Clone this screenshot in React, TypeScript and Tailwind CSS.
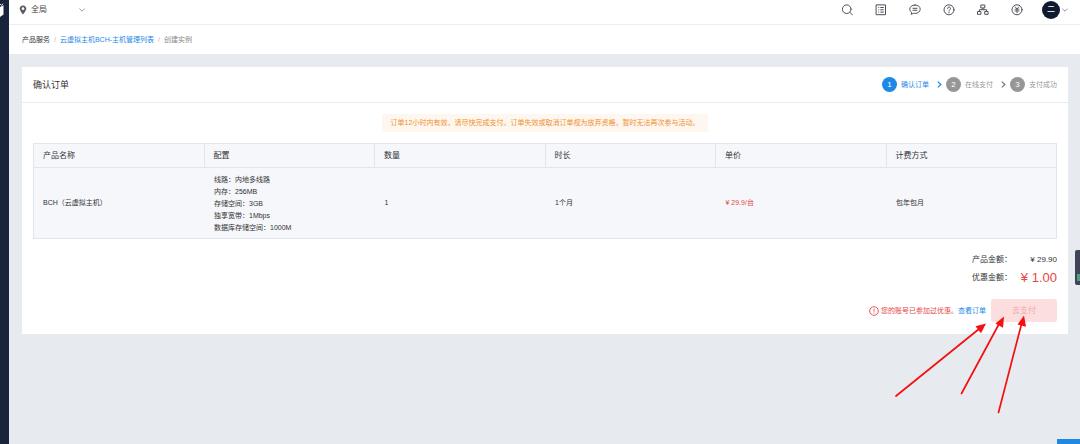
import type { ReactNode } from "react";
import clsx from "clsx";

const steps = ["确认订单", "在线支付", "支付成功"];

const columns = ["产品名称", "配置", "数量", "时长", "单价", "计费方式"];

const specs = [
  "线路：内地多线路",
  "内存：256MB",
  "存储空间：3GB",
  "独享宽带：1Mbps",
  "数据库存储空间：1000M",
];

function Icon({ children }: { children: ReactNode }) {
  return (
    <svg
      viewBox="0 0 12 12"
      className="block h-3 w-3"
      fill="none"
      stroke="currentColor"
      strokeWidth="1"
      strokeLinecap="round"
      strokeLinejoin="round"
    >
      {children}
    </svg>
  );
}

function ChevronDown() {
  return (
    <svg viewBox="0 0 6 4" className="block h-1 w-1.5" fill="none" stroke="#8a8f99" strokeWidth="0.9">
      <path d="M0.4 0.6 3 3.2 5.6 0.6" />
    </svg>
  );
}

const tools = [
  {
    label: "搜索",
    icon: (
      <>
        <circle cx="5.7" cy="5.2" r="4.3" />
        <path d="M8.8 8.3 11.5 11" />
      </>
    ),
  },
  {
    label: "备案",
    icon: (
      <>
        <rect x="1.5" y="0.9" width="9" height="9.8" />
        <path d="M3.3 3.5h0.9M5.3 3.5h3.5M3.3 5.8h0.9M5.3 5.8h3.5M3.3 8.1h0.9M5.3 8.1h3.5" strokeLinecap="butt" />
      </>
    ),
  },
  {
    label: "消息",
    icon: (
      <>
        <path d="M6 1c3 0 5.2 1.8 5.2 4.2S9 9.4 6 9.4c-.5 0-1 0-1.5-.2L2.3 10.4 2.5 8.3C1.4 7.5.8 6.4.8 5.2.8 2.8 3 1 6 1Z" />
        <path d="M4 4.300h4M4 6.300h4" />
      </>
    ),
  },
  {
    label: "帮助",
    icon: (
      <>
        <circle cx="6" cy="5.8" r="5" />
        <path d="M4.5 4.5c0-2 3-2 3 0 0 1.1-1.5 1.1-1.5 2.4M6 8.3v.4" />
      </>
    ),
  },
  {
    label: "组织",
    icon: (
      <>
        <rect x="4.2" y="1" width="3.6" height="3" />
        <rect x="0.9" y="7.5" width="3" height="2.800" />
        <rect x="8.1" y="7.5" width="3" height="2.800" />
        <path d="M6 4v1.700M2.400 7.500V5.700h7.200v1.800" />
      </>
    ),
  },
  {
    label: "费用",
    icon: (
      <>
        <circle cx="6" cy="5.8" r="5" />
        <path d="M4.300 3 6 5l1.700-2M6 5v3.800M4 5.200h4M4 7h4" strokeWidth="0.9" />
      </>
    ),
  },
];

function TopBar() {
  return (
    <header className="flex h-[25px] items-center justify-between border-b border-[#eceef1] bg-white pr-3 pb-1 pl-2.5">
      <button type="button" className="flex items-center text-[8px] leading-3 text-[#444]">
        <svg viewBox="0 0 8 10" className="mr-1 block h-2.5 w-2" fill="#555a63">
          <path
            fillRule="evenodd"
            d="M4 .4C2.100.4.700 1.800.700 3.600.700 5.800 4 9.600 4 9.600s3.300-3.800 3.300-6C7.300 1.800 5.900.4 4 .4Zm0 1.900a1.400 1.400 0 1 1 0 2.800 1.400 1.400 0 0 1 0-2.800Z"
          />
        </svg>
        <span className="mr-8">全局</span>
        <ChevronDown />
      </button>
      <div className="flex items-center">
        <nav className="flex gap-[22px] text-[#4c5058]">
          {tools.map((tool) => (
            <button key={tool.label} type="button" aria-label={tool.label}>
              <Icon>{tool.icon}</Icon>
            </button>
          ))}
        </nav>
        <button type="button" className="ml-[19px] flex items-center gap-0.5">
          <span className="flex h-[18px] w-[18px] items-center justify-center rounded-full bg-[#10192e] text-[8px] leading-3 text-white">
            二
          </span>
          <ChevronDown />
        </button>
      </div>
    </header>
  );
}

function Steps() {
  return (
    <ol className="flex items-center text-[7px] leading-3">
      {steps.map((step, i) => (
        <li key={step} className={clsx("flex items-center", i === 0 ? "text-[#1e88e5]" : "text-[#999]")}>
          <span
            className={clsx(
              "mr-1 flex h-[15px] w-[15px] items-center justify-center rounded-full text-[8px] text-white",
              i === 0 ? "bg-[#1e88e5]" : "bg-[#969696]"
            )}
          >
            {i + 1}
          </span>
          {step}
          {i < steps.length - 1 && (
            <svg
              viewBox="0 0 5 7"
              className="mr-1 ml-2 block h-[7px] w-[5px]"
              fill="none"
              stroke={i === 0 ? "#1e88e5" : "#777"}
              strokeWidth="1.200"
            >
              <path d="M0.800 0.600 3.900 3.500 0.800 6.400" />
            </svg>
          )}
        </li>
      ))}
    </ol>
  );
}

function OrderTable() {
  return (
    <table className="w-full table-fixed border-collapse border border-[#e2e5eb] bg-[#f5f7fb] text-left text-[7px] leading-3 text-[#333]">
      <thead>
        <tr className="h-6 border-b border-[#e2e5eb] text-[8px]">
          {columns.map((column) => (
            <th key={column} className="border-r border-[#e2e5eb] px-[9px] font-normal">
              {column}
            </th>
          ))}
        </tr>
      </thead>
      <tbody>
        <tr>
          <td className="px-[9px]">BCH（云虚拟主机）</td>
          <td className="px-2.5 pt-1.5 pb-1">
            {specs.map((spec) => (
              <div key={spec}>{spec}</div>
            ))}
          </td>
          <td className="px-2.5">1</td>
          <td className="px-2.5">1个月</td>
          <td className="px-2.5 text-[#e64545]">¥ 29.9/台</td>
          <td className="px-2.5">包年包月</td>
        </tr>
      </tbody>
    </table>
  );
}

// hand-drawn pointers over the pay button
function Arrows() {
  return (
    <svg viewBox="0 0 170 120" className="pointer-events-none absolute top-0 right-0 h-[120px] w-[170px]">
      <g stroke="#f50f0f" strokeWidth="1.7" strokeLinecap="round">
        <path d="M9 97 92 30" />
        <path d="M74.5 94.500 112 25" />
        <path d="M111.500 113.500 134.500 25" />
      </g>
      <g fill="#f50f0f">
        <path d="M99 24.500 88.500 27.300 94 34.200Z" />
        <path d="M117 17.500 108.500 24.500 116 28.800Z" />
        <path d="M137 16.500 130.500 25.500 139 27.700Z" />
      </g>
    </svg>
  );
}

function Checkout() {
  return (
    <>
      <dl className="mt-3 grid grid-cols-[40px_45px] justify-end text-[8px] leading-[18px] text-[#333]">
        <dt>产品金额：</dt>
        <dd className="text-right">¥ 29.90</dd>
        <dt>优惠金额：</dt>
        <dd className="text-right text-[13px] text-[#e64545]">¥ 1.00</dd>
      </dl>
      <div className="relative mt-3 flex items-center justify-end text-[7px] leading-3">
        <svg viewBox="0 0 10 10" className="mr-0.5 block h-2.5 w-2.5" fill="none" stroke="#e64545" strokeWidth="0.9">
          <circle cx="5" cy="5" r="4.300" />
          <path d="M5 2.500v3.200M5 6.600v.9" />
        </svg>
        <p className="text-[#e64545]">您的账号已参加过优惠。</p>
        <a href="#orders" className="mr-[5px] text-[#1e88e5]">
          查看订单
        </a>
        <button
          type="button"
          disabled
          className="h-[23px] w-[66px] rounded-[3px] bg-[#fcdede] text-[8px] text-[#f0a9a9]"
        >
          去支付
        </button>
        <Arrows />
      </div>
    </>
  );
}

export default function App() {
  return (
    <div className="flex min-h-screen bg-[#e7eaef] font-['Liberation_Sans','Noto_Sans_CJK_SC',sans-serif]">
      <aside className="w-[9px] shrink-0 overflow-hidden bg-[#1a233c]">
        <svg viewBox="0 0 9 20" className="block h-5 w-[9px]">
          <path d="M0 7 3.500 5.200v9.300L0 17Z" fill="#fff" />
          <path d="M0 4.200 1.500 5.200 3.200 3.800" fill="none" stroke="#fff" strokeWidth="0.900" />
        </svg>
      </aside>
      <div className="min-w-0 flex-1">
        <TopBar />
        <nav className="flex h-[29px] items-center gap-1 bg-white px-[13px] text-[7px] leading-3 text-[#888]">
          <a href="#products" className="text-[#333]">
            产品服务
          </a>
          <span className="text-[#bbb]">/</span>
          <a href="#hosts" className="text-[#1e88e5]">
            云虚拟主机BCH-主机管理列表
          </a>
          <span className="text-[#bbb]">/</span>
          <span>创建实例</span>
        </nav>
        <main className="py-[13px] pr-3 pl-[13px]">
          <section className="bg-white">
            <div className="flex h-9 items-center justify-between border-b border-[#e8ebf0] px-[11px]">
              <h1 className="text-[9px] leading-3 text-[#333]">确认订单</h1>
              <Steps />
            </div>
            <div className="px-[11px] pt-[11px] pb-3">
              <p className="mx-auto mb-[11px] w-fit rounded-[2px] bg-[#fef7ef] px-[9px] py-[3px] text-[7px] leading-3 text-[#f0902f]">
                订单12小时内有效，请尽快完成支付。订单失效或取消订单视为放弃资格，暂时无法再次参与活动。
              </p>
              <OrderTable />
              <Checkout />
            </div>
          </section>
        </main>
      </div>
      <button
        type="button"
        aria-label="展开工具"
        className="fixed top-[250px] right-0 flex h-[35px] w-[5px] items-end rounded-l-[2px] bg-[#3f4557] pb-1 pl-0.5"
      >
        <span className="h-[7px] w-[3px] bg-[#4f9c88]" />
      </button>
      <button type="button" aria-label="在线咨询" className="fixed right-0 bottom-0 h-[5px] w-[23px] bg-[#1e88e5]" />
    </div>
  );
}
